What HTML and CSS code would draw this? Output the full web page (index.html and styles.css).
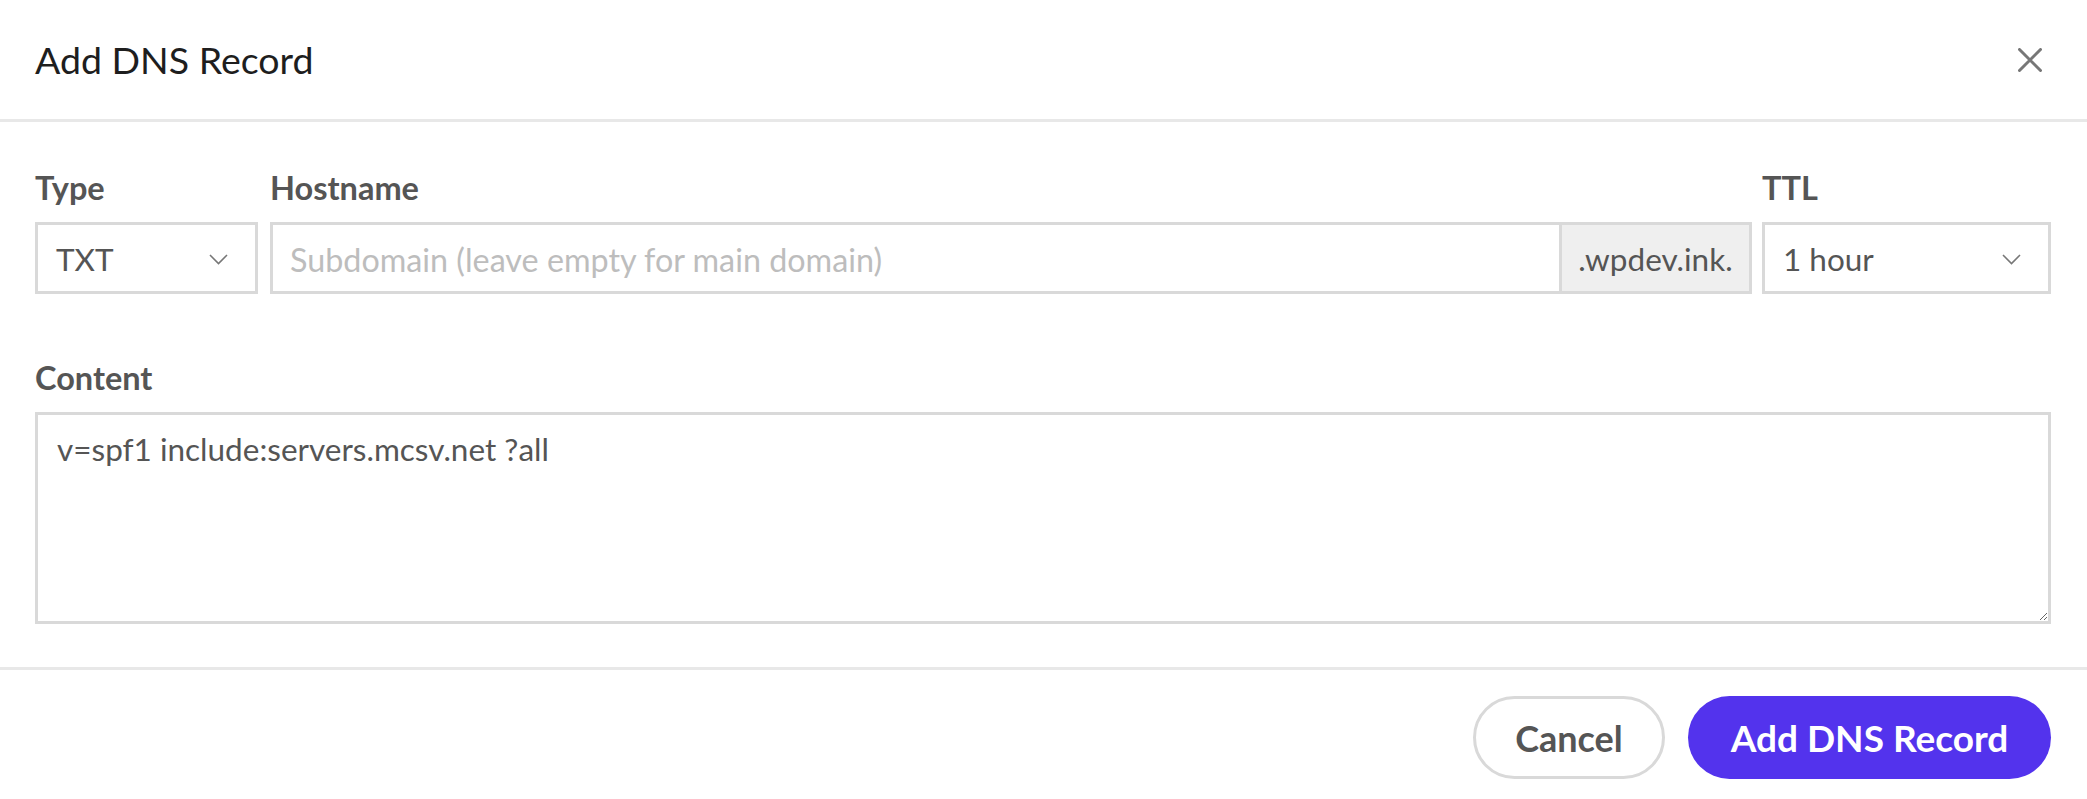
FILE: index.html
```html
<!DOCTYPE html>
<html lang="en">
<head>
<meta charset="utf-8">
<title>Add DNS Record</title>
<link rel="stylesheet" href="styles.css">
</head>
<body>
<div class="modal">
  <header class="modal-header">
    <h1 class="modal-title">Add DNS Record</h1>
    <button class="close-btn" aria-label="Close">
      <svg width="24" height="24" viewBox="0 0 24 24"><path d="M1.5 1.5 L22.5 22.5 M22.5 1.5 L1.5 22.5" stroke="#777" stroke-width="3" stroke-linecap="round" fill="none"/></svg>
    </button>
  </header>
  <main class="modal-body">
    <div class="field-row">
      <div class="field field-type">
        <label class="field-label">Type</label>
        <div class="select">
          <span class="select-value">TXT</span>
          <svg class="chevron" width="19" height="11" viewBox="0 0 19 11"><path d="M1 1 L9.5 9.5 L18 1" stroke="#777" stroke-width="1.6" fill="none"/></svg>
        </div>
      </div>
      <div class="field field-host">
        <label class="field-label">Hostname</label>
        <div class="input-group">
          <input class="text-input" type="text" placeholder="Subdomain (leave empty for main domain)">
          <span class="input-suffix">.wpdev.ink.</span>
        </div>
      </div>
      <div class="field field-ttl">
        <label class="field-label">TTL</label>
        <div class="select">
          <span class="select-value">1 hour</span>
          <svg class="chevron" width="19" height="11" viewBox="0 0 19 11"><path d="M1 1 L9.5 9.5 L18 1" stroke="#777" stroke-width="1.6" fill="none"/></svg>
        </div>
      </div>
    </div>
    <div class="field field-content">
      <label class="field-label">Content</label>
      <textarea class="textarea">v=spf1 include:servers.mcsv.net ?all</textarea>
    </div>
  </main>
  <footer class="modal-footer">
    <button class="btn btn-secondary">Cancel</button>
    <button class="btn btn-primary">Add DNS Record</button>
  </footer>
</div>
</body>
</html>
```
FILE: styles.css
```css
* { box-sizing: border-box; }
html, body { margin: 0; padding: 0; background: #fff; }
body { font-family: "Lato", "Open Sans", sans-serif; color: #555; }

.modal { width: 100%; }

.modal-header {
  height: 122px;
  border-bottom: 3px solid #e8e8e8;
  display: flex;
  align-items: center;
  justify-content: space-between;
  padding: 0 45px 0 35px;
}
.modal-title {
  margin: 0;
  font-size: 37.5px;
  font-weight: 400;
  color: #1e1e1e;
  line-height: normal;
}
.close-btn {
  border: 0;
  background: none;
  padding: 0;
  width: 24px;
  height: 24px;
  display: flex;
}

.modal-body {
  padding: 46px 36px 43px 35px;
}

.field-row {
  display: flex;
  gap: 12px;
}
.field-type { width: 223px; flex: none; }
.field-host { flex: 1; margin-right: -2px; }
.field-ttl { width: 289px; flex: none; }

.field-label {
  display: block;
  font-size: 32.5px;
  font-weight: 700;
  color: #555;
  line-height: 40px;
  margin-bottom: 14px;
}

.select {
  height: 72px;
  border: 3px solid #d9d9d9;
  display: flex;
  align-items: center;
  justify-content: space-between;
  padding: 0 27px 0 18px;
  background: #fff;
}
.select-value {
  font-size: 31.5px;
  color: #555;
  padding-top: 2px;
}
.chevron { margin-top: 2px; }

.input-group {
  display: flex;
  height: 72px;
}
.text-input {
  flex: 1;
  min-width: 0;
  height: 72px;
  border: 3px solid #d9d9d9;
  border-right: 0;
  padding: 2px 17px 0;
  font-family: inherit;
  font-size: 32.3px;
  color: #555;
  outline: none;
}
.text-input::placeholder { color: #bdbdbd; }
.input-suffix {
  flex: none;
  width: 193px;
  height: 72px;
  border: 3px solid #d9d9d9;
  background: #efefef;
  display: flex;
  align-items: center;
  justify-content: center;
  font-size: 31.5px;
  color: #555;
  padding-top: 2px;
}

.field-content { margin-top: 64px; }
.textarea {
  display: block;
  width: 100%;
  height: 212px;
  border: 3px solid #d9d9d9;
  padding: 14px 19px;
  font-family: inherit;
  font-size: 31.5px;
  line-height: 40px;
  color: #555;
  outline: none;
  resize: vertical;
}

.modal-footer {
  border-top: 3px solid #e8e8e8;
  padding: 26px 36px 20px;
  display: flex;
  justify-content: flex-end;
  gap: 23px;
}
.btn {
  height: 83px;
  border-radius: 42px;
  font-family: inherit;
  font-weight: 700;
  padding: 0 42px;
  display: flex;
  align-items: center;
  justify-content: center;
  cursor: pointer;
}
.btn-secondary {
  width: 192px;
  background: #fff;
  border: 3px solid #d9d9d9;
  color: #555;
  font-size: 36px;
}
.btn-primary {
  width: 363px;
  background: #5333ed;
  border: 0;
  color: #fff;
  font-size: 37px;
}
```
